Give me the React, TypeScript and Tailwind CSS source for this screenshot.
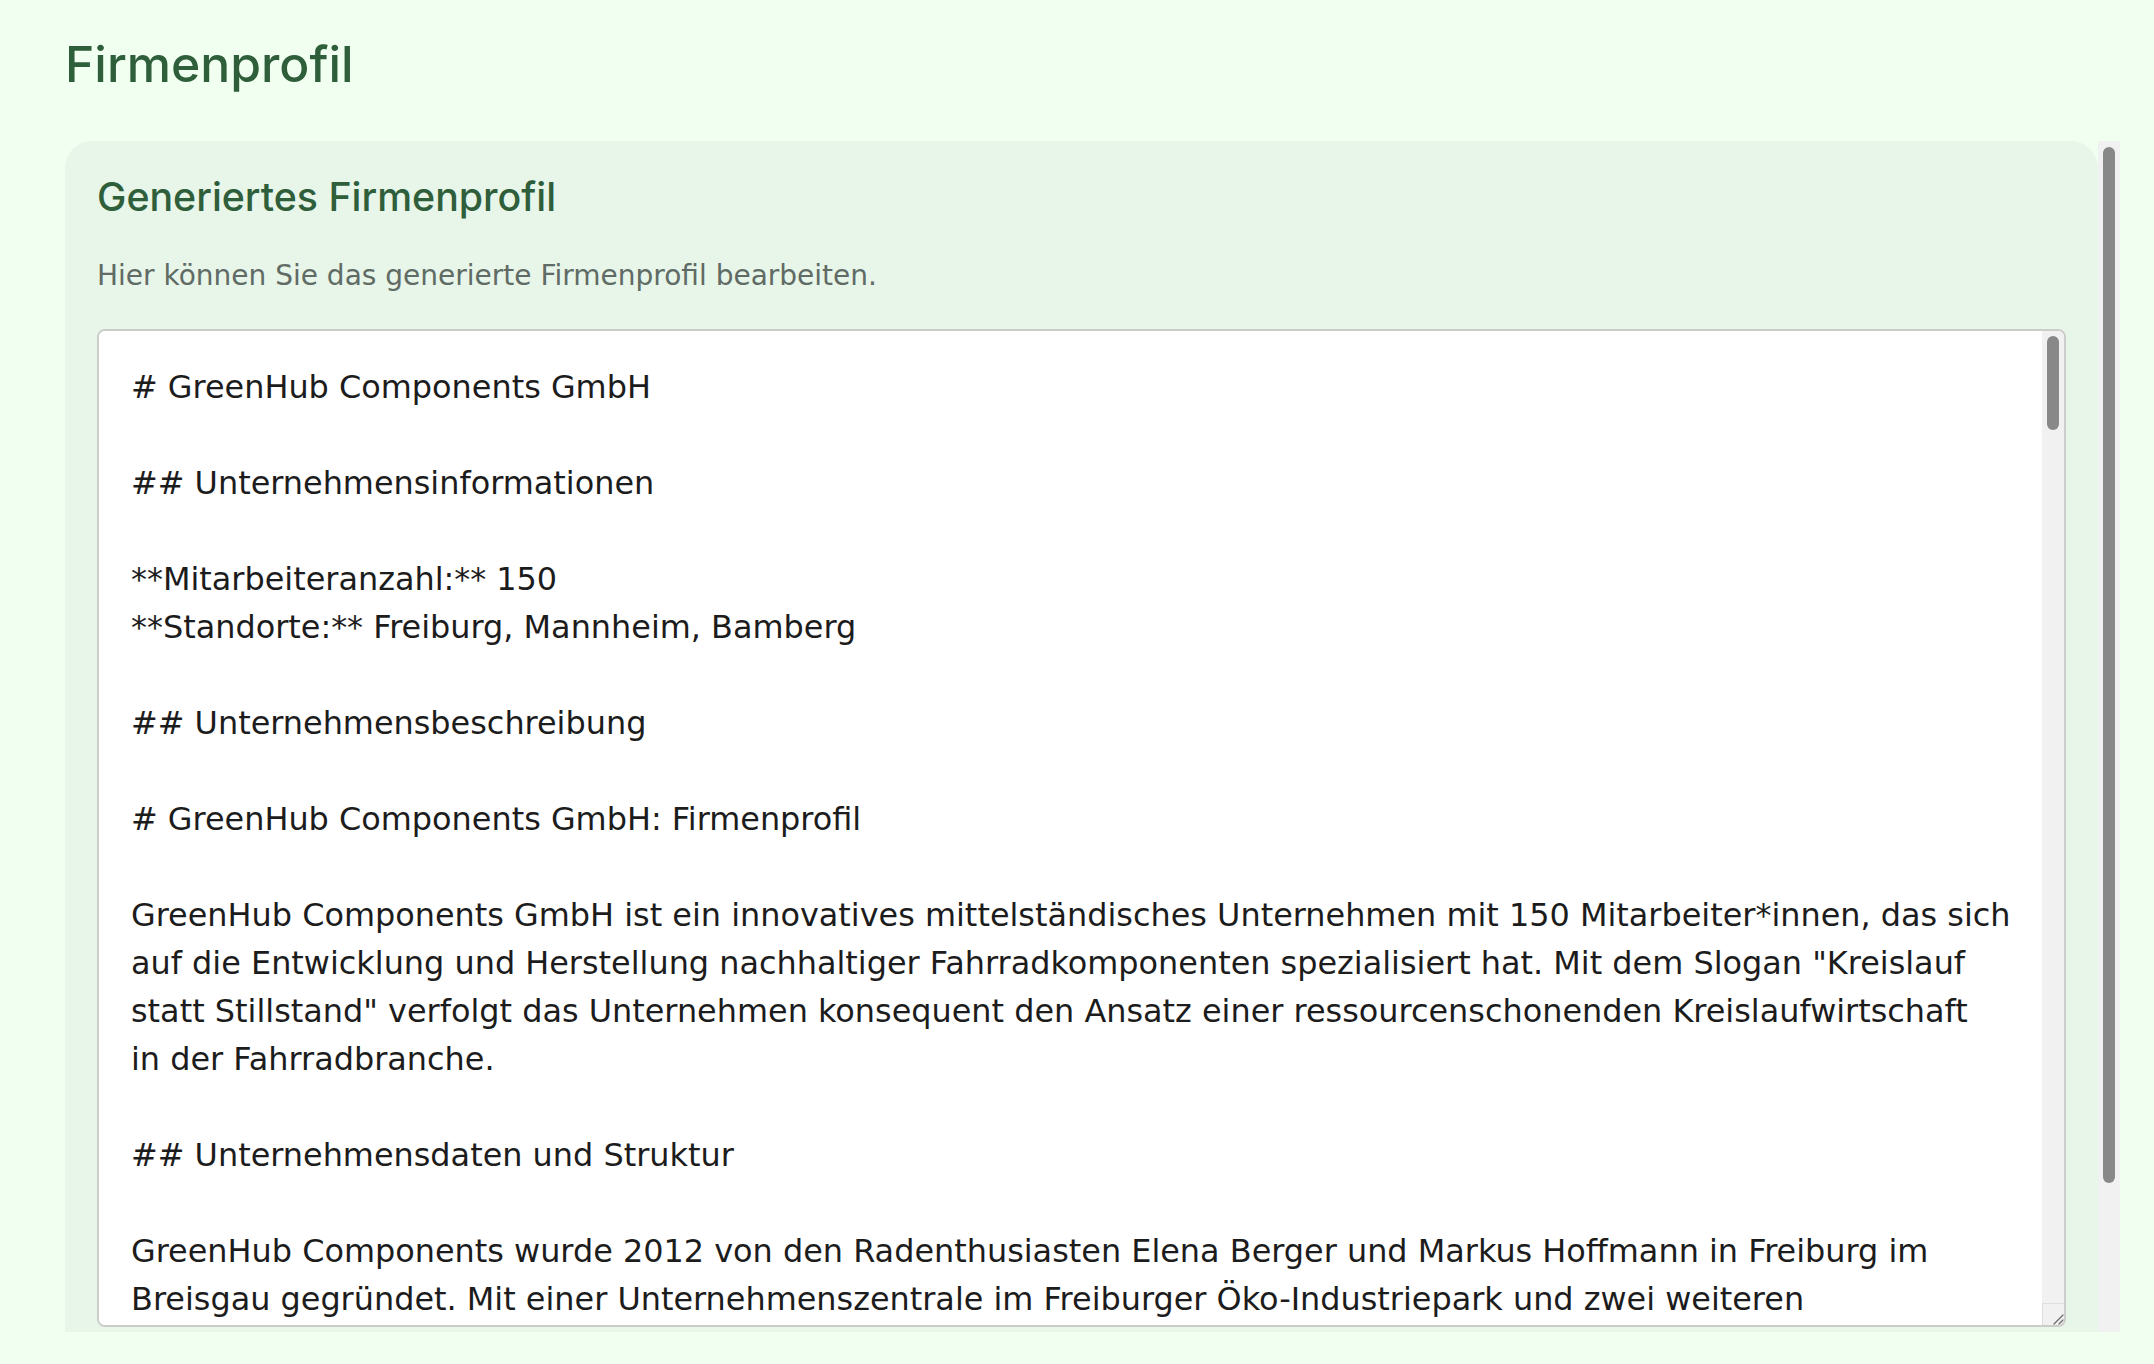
import React from "react";

const TEXT = `# GreenHub Components GmbH

## Unternehmensinformationen

**Mitarbeiteranzahl:** 150
**Standorte:** Freiburg, Mannheim, Bamberg

## Unternehmensbeschreibung

# GreenHub Components GmbH: Firmenprofil

GreenHub Components GmbH ist ein innovatives mittelständisches Unternehmen mit 150 Mitarbeiter*innen, das sich
auf die Entwicklung und Herstellung nachhaltiger Fahrradkomponenten spezialisiert hat. Mit dem Slogan "Kreislauf
statt Stillstand" verfolgt das Unternehmen konsequent den Ansatz einer ressourcenschonenden Kreislaufwirtschaft
in der Fahrradbranche.

## Unternehmensdaten und Struktur

GreenHub Components wurde 2012 von den Radenthusiasten Elena Berger und Markus Hoffmann in Freiburg im
Breisgau gegründet. Mit einer Unternehmenszentrale im Freiburger Öko-Industriepark und zwei weiteren
Standorten in Mannheim und Bamberg deckt das Unternehmen die gesamte Wertschöpfungskette ab.

## Produkte und Leistungen

Das Sortiment umfasst Lenker, Sattelstützen, Kurbeln und Pedale aus recyceltem Aluminium
sowie biobasierten Verbundwerkstoffen.
`;

const BODY_FONT = { fontFamily: "'DejaVu Sans', 'Noto Sans', sans-serif" };
const HEAD_FONT = { fontFamily: "Inter, 'Noto Sans', sans-serif" };

export default function App() {
  return (
    <div
      className="h-screen bg-[#f0fff0] flex flex-col pl-[65px] pr-[34px] pb-[32px] overflow-hidden"
      style={BODY_FONT}
    >
      <h1
        className="text-[49.8px] leading-[60px] text-[#2f5e3b] font-medium mt-[34px] shrink-0"
        style={HEAD_FONT}
      >
        Firmenprofil
      </h1>
      <div className="mt-[47px] flex-1 min-h-0 flex">
        <div className="flex-1 min-w-0 overflow-hidden">
          <div className="bg-[#e8f5e9] rounded-[27px] px-[32px] pt-[32px] pb-[40px]">
            <h2
              className="text-[39.3px] leading-[48px] font-medium text-[#2f5e3b]"
              style={HEAD_FONT}
            >
              Generiertes Firmenprofil
            </h2>
            <p className="mt-[37px] text-[28px] leading-[36px] text-[#5f6b64]">
              Hier können Sie das generierte Firmenprofil bearbeiten.
            </p>
            <div className="mt-[35px] h-[998px] flex bg-white border-2 border-[#cccccc] rounded-[8px] overflow-hidden">
              <textarea
                defaultValue={TEXT}
                spellCheck={false}
                className="flex-1 min-w-0 h-full resize-none bg-white p-[32px] text-[31.9px] leading-[48px] text-[#1c1c1c] outline-none whitespace-pre overflow-hidden"
                style={BODY_FONT}
              />
              <div className="w-[22px] shrink-0 flex flex-col bg-[#f1f1f1]">
                <div className="flex-1 pt-[5px] px-[5px]">
                  <div className="w-[12px] h-[94px] rounded-full bg-[#888888]" />
                </div>
                <div className="h-[22px] border-t border-l border-[#dedede] bg-[#f1f1f1]">
                  <svg width="22" height="22" viewBox="0 0 22 22">
                    <path d="M20 11 L11 20 M20 16 L16 20" stroke="#6b6b6b" strokeWidth="1.3" strokeLinecap="round" />
                  </svg>
                </div>
              </div>
            </div>
            <div className="mt-[32px] flex gap-4">
              <button className="h-[60px] px-8 rounded-[12px] bg-[#2e7d32] text-white text-[26px]">
                Speichern
              </button>
            </div>
          </div>
        </div>
        <div className="w-[22px] shrink-0 bg-[#f1f1f1] pt-[6px] px-[5px]">
          <div className="w-[12px] h-[1036px] rounded-full bg-[#888888]" />
        </div>
      </div>
    </div>
  );
}
